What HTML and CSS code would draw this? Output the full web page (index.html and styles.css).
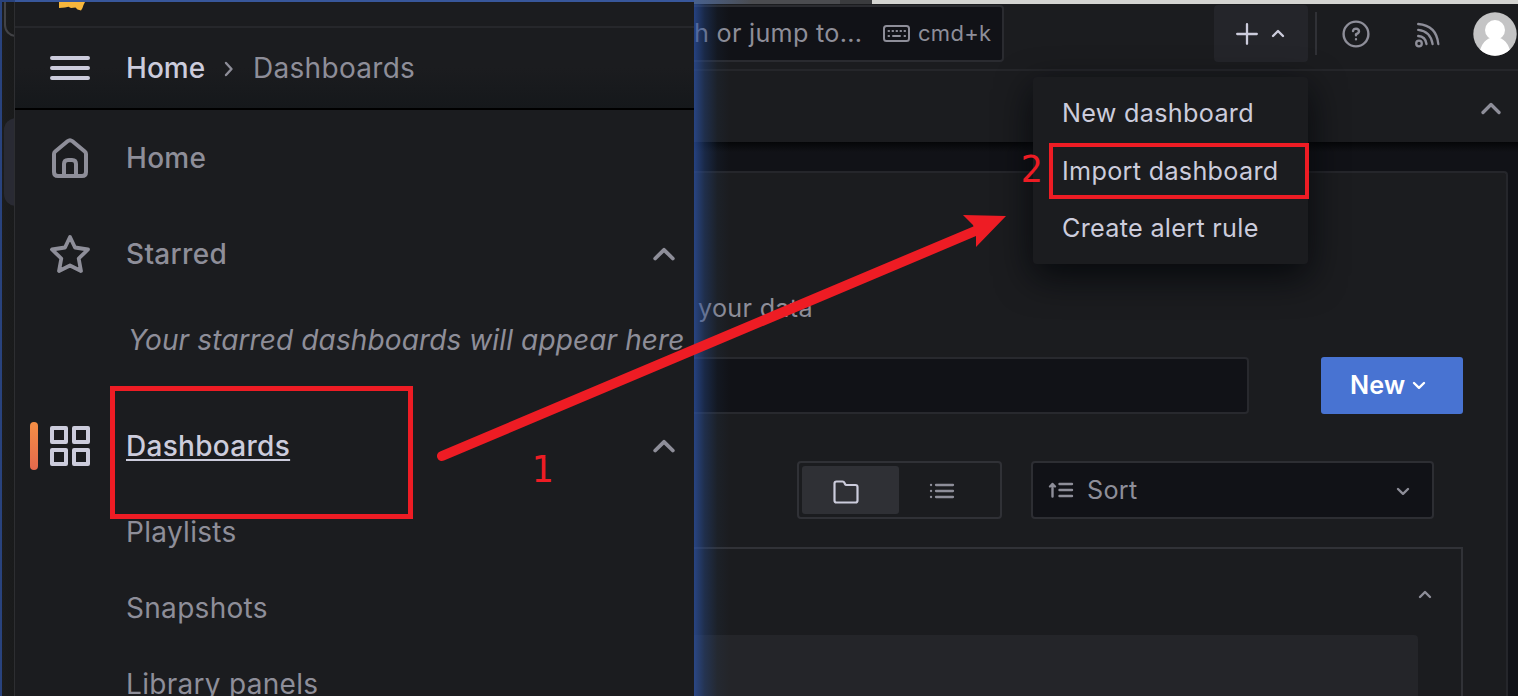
FILE: index.html
```html
<!DOCTYPE html>
<html lang="en">
<head>
<meta charset="utf-8">
<title>Dashboards</title>
<link rel="stylesheet" href="styles.css">
</head>
<body>
<div class="stage">
  <div class="edge">
    <div class="edge-window"><div class="edge-box"></div><div class="edge-tab"></div></div>
  </div>
  <aside class="sidebar">
    <div class="brand">
      <svg class="brand-logo" width="28" height="10" viewBox="0 0 28 10"><path d="M1 0H27L25.500 3L24.500 6L23 8.500L19.500 7.500L17.500 5.500L13 6L10.500 4.800L7 5.500L1 6Z" fill="#f7b63b"/></svg>
    </div>
    <div class="crumbs">
      <svg class="burger" width="40" height="24" viewBox="0 0 40 24" stroke="#ccccdc" stroke-width="4" stroke-linecap="round"><path d="M2 2H38M2 12H38M2 22H38"/></svg>
      <span class="crumb-home">Home</span>
      <svg class="crumb-sep" width="10" height="16" viewBox="0 0 10 16" fill="none" stroke="#8d8d98" stroke-width="2.400" stroke-linecap="round" stroke-linejoin="round"><path d="M2 2L7.500 8L2 14"/></svg>
      <span class="crumb-page">Dashboards</span>
    </div>
    <nav class="nav">
      <a class="nav-row">
        <svg class="nav-icon" width="40" height="44" viewBox="0 0 40 44" fill="none" stroke="#8e8e99" stroke-width="4" stroke-linejoin="round"><path d="M4 18Q4 16.500 5.200 15.500L17.500 5.200Q20 3.200 22.500 5.200L34.800 15.500Q36 16.500 36 18V36Q36 40 32 40H8Q4 40 4 36ZM14 40V28Q14 24 18 24H22Q26 24 26 28V40"/></svg>
        <span class="nav-label">Home</span>
      </a>
      <a class="nav-row">
        <svg class="nav-icon" width="40" height="44" viewBox="0 0 40 44" fill="none" stroke="#8e8e99" stroke-width="3.800" stroke-linejoin="round"><path d="M20 5L25 15.500L38 17.500L28.700 26.500L31 39L20 33.500L9 39L11.300 26.500L2 17.500L15 15.500Z"/></svg>
        <span class="nav-label">Starred</span>
        <svg class="nav-chevron" width="22" height="14" viewBox="0 0 22 14" fill="none" stroke="#8e8e99" stroke-width="3.800" stroke-linecap="round" stroke-linejoin="round"><path d="M2.200 11.500L11 2.800L19.800 11.500"/></svg>
      </a>
      <div class="nav-sub nav-note">Your starred dashboards will appear here</div>
      <a class="nav-row nav-active">
        <svg class="nav-icon" width="40" height="40" viewBox="0 0 40 40" fill="none" stroke="#ccccdc" stroke-width="4" stroke-linejoin="round"><path d="M2 2H16V16H2ZM24 2H38V16H24ZM2 24H16V38H2ZM24 24H38V38H24Z"/></svg>
        <span class="nav-label">Dashboards</span>
        <svg class="nav-chevron" width="22" height="14" viewBox="0 0 22 14" fill="none" stroke="#8e8e99" stroke-width="3.800" stroke-linecap="round" stroke-linejoin="round"><path d="M2.200 11.500L11 2.800L19.800 11.500"/></svg>
      </a>
      <a class="nav-sub">Playlists</a>
      <a class="nav-sub">Snapshots</a>
      <a class="nav-sub">Library panels</a>
    </nav>
  </aside>
  <main class="main">
    <div class="tabstrip"><div class="tab-a"></div><div class="tab-b"></div><div class="tab-c"></div></div>
    <header class="topbar">
      <div class="search">
        <span class="search-text">h or jump to...</span>
        <svg class="key-icon" width="27" height="17" viewBox="0 0 27 17" fill="none" stroke="#8e8e99" stroke-width="2" stroke-linecap="round"><rect x="1" y="1" width="25" height="15" rx="2.500"/><path d="M5.500 6h.6M9.500 6h.6M13.500 6h.6M17.500 6h.6M21.500 6h.6M5.500 11h.6M10 11h7M21.500 11h.6"/></svg>
        <span class="key-text">cmd+k</span>
      </div>
      <div class="add">
        <svg width="22" height="22" viewBox="0 0 22 22" stroke="#ccccdc" stroke-width="2.300" stroke-linecap="round"><path d="M11 1.200V20.800M1.200 11H20.800"/></svg>
        <svg class="add-chev" width="14" height="9" viewBox="0 0 14 9" fill="none" stroke="#ccccdc" stroke-width="2.400" stroke-linecap="round" stroke-linejoin="round"><path d="M2 7L7 2L12 7"/></svg>
      </div>
      <div class="divider"></div>
      <svg class="help" width="28" height="28" viewBox="0 0 28 28" fill="none" stroke="#8e8e99" stroke-width="2.400" stroke-linecap="round" stroke-linejoin="round"><circle cx="14" cy="14" r="12.400"/><path d="M11 11Q11.500 8.600 14 8.600Q17 8.800 17 11.400Q16.800 13.400 14 14.200V15.200M14 19.200V19.300"/></svg>
      <svg class="news" width="26" height="26" viewBox="0 0 26 26" fill="none" stroke="#8e8e99" stroke-width="2.300" stroke-linecap="round"><circle cx="5" cy="21.500" r="2.800"/><path d="M4.200 14Q11.500 14.500 12.500 22M4.200 7.800Q16.500 9 18.600 22M4.200 2Q22.500 3.500 24.300 22"/></svg>
      <svg class="avatar" width="44" height="44" viewBox="0 0 44 44"><defs><clipPath id="face"><circle cx="22" cy="22" r="21.700"/></clipPath></defs><g clip-path="url(#face)"><rect width="44" height="44" fill="#c4c4c5"/><circle cx="22" cy="18" r="10" fill="#fff"/><path d="M6 44Q8 26 22 25Q36 26 38 44Z" fill="#fff"/></g></svg>
    </header>
    <div class="toolbar">
      <svg width="20" height="13" viewBox="0 0 20 13" fill="none" stroke="#8e8e99" stroke-width="3.300" stroke-linecap="round" stroke-linejoin="round"><path d="M2 10.500L10 2.500L18 10.500"/></svg>
    </div>
    <div class="page">
      <section class="panel">
        <p class="subtitle">your data</p>
        <div class="find-row">
          <div class="find"></div>
          <button class="new-btn">New<svg width="14" height="9" viewBox="0 0 14 9" fill="none" stroke="#fff" stroke-width="2.400" stroke-linecap="round" stroke-linejoin="round"><path d="M2 2L7 6.800L12 2"/></svg></button>
        </div>
        <div class="filters">
          <div class="views">
            <div class="view-on"><svg width="26" height="24" viewBox="0 0 26 24" fill="none" stroke="#ccccdc" stroke-width="2.200" stroke-linejoin="round"><path d="M1.500 3.500Q1.500 1.500 3.500 1.500H9.500Q11 1.500 11.500 3L12 4Q12.400 5 13.500 5H22.500Q24.500 5 24.500 7V20.500Q24.500 22.500 22.500 22.500H3.500Q1.500 22.500 1.500 20.500Z"/></svg></div>
            <div class="view-off"><svg width="26" height="18" viewBox="0 0 26 18" stroke="#8e8e99" stroke-width="2.300" stroke-linecap="round"><path d="M2 3h.1M2 9h.1M2 15h.1M7 3H24M7 9H24M7 15H24"/></svg></div>
          </div>
          <div class="sort">
            <svg width="26" height="18" viewBox="0 0 26 18" fill="none" stroke="#8e8e99" stroke-width="2.400" stroke-linecap="round" stroke-linejoin="round"><path d="M4.500 15.500V3M2 5.500L4.500 3L7 5.500M11.500 3H24M11.500 9H24M11.500 15H24"/></svg>
            <span class="sort-text">Sort</span>
            <svg class="sort-chev" width="14" height="9" viewBox="0 0 14 9" fill="none" stroke="#8e8e99" stroke-width="2.400" stroke-linecap="round" stroke-linejoin="round"><path d="M2 2L7 6.800L12 2"/></svg>
          </div>
        </div>
        <div class="results">
          <div class="results-head"><svg width="14" height="9" viewBox="0 0 14 9" fill="none" stroke="#8e8e99" stroke-width="2.400" stroke-linecap="round" stroke-linejoin="round"><path d="M2 7L7 2L12 7"/></svg></div>
          <div class="results-body"></div>
        </div>
      </section>
    </div>
  </main>
  <div class="glow"></div>
  <div class="menu">
    <div class="menu-item">New dashboard</div>
    <div class="menu-item">Import dashboard</div>
    <div class="menu-item">Create alert rule</div>
  </div>
  <div class="mark mark-nav"></div>
  <div class="mark mark-menu"></div>
  <svg class="arrow" width="1518" height="696" viewBox="0 0 1518 696"><path d="M442 456L980 229" stroke="#ee1c24" stroke-width="10" stroke-linecap="round"/><path d="M1006 216L963 215L973 225L976 234V247Z" fill="#ee1c24"/></svg>
  <span class="step step-one">1</span>
  <span class="step step-two">2</span>
</div>
</body>
</html>
```
FILE: styles.css
```css
* { box-sizing: border-box; }
body { margin: 0; background: #111217; }
.stage {
  position: relative;
  display: grid;
  grid-template-columns: 15px 679px 824px;
  width: 1518px;
  height: 696px;
  overflow: hidden;
  font-family: Inter, "Liberation Sans", sans-serif;
  color: #8e8e99;
}
svg { display: block; flex: none; }

/* window behind the sidebar */
.edge { background: #29437e; padding: 2px 0 0 2px; height: 696px; }
.edge-window { height: 694px; background: linear-gradient(90deg, #1c1d1e, #191a1b); border-right: 1px solid #2d2e31; overflow: hidden; padding-left: 2px; }
.edge-box { width: 30px; height: 35px; border: 2px solid #414246; border-top: 0; border-radius: 0 0 0 12px; }
.edge-tab { width: 30px; height: 88px; margin-top: 81px; border-radius: 12px; background: #292a33; }

.sidebar { border-top: 2px solid #38579b; background: #1b1c1f; height: 696px; overflow: hidden; }
.brand { height: 26px; border-bottom: 2px solid #26272b; padding-left: 43px; }
.crumbs {
  display: flex; align-items: center; height: 82px; padding-left: 35px; padding-bottom: 1px;
  border-bottom: 2px solid #000; font-size: 28px; letter-spacing: .3px;
  background: linear-gradient(#1b1c1f 50%, #15181b);
}
.crumb-home { color: #ccccdc; font-weight: 500; letter-spacing: .05px; margin-left: 36px; width: 80px; }
.crumb-sep { margin-left: 18px; margin-top: 3px; }
.crumb-page { margin-left: 19px; }

.nav { font-size: 28px; letter-spacing: .3px; }
.nav-row { display: flex; align-items: center; height: 96px; padding: 0 19px 0 35px; }
.nav-label { font-weight: 500; margin-left: 36px; }
.nav-chevron { margin-left: auto; }
.nav-sub { display: flex; align-items: center; height: 76px; padding-left: 111px; white-space: nowrap; }
.nav-note { font-style: italic; letter-spacing: .12px; padding-left: 113px; margin-bottom: 20px; }
.nav-active { padding-left: 15px; color: #ccccdc; }
.nav-active::before { content: ""; width: 8px; height: 48px; border-radius: 4px; background: linear-gradient(#f58e45, #e5694d); margin-right: 12px; }
.nav-active .nav-label { text-decoration: underline; text-decoration-thickness: 2px; text-underline-offset: 3px; }

.main { display: flex; flex-direction: column; height: 696px; overflow: hidden; background: #111217; }
.tabstrip { display: flex; height: 4px; flex: none; }
.tab-a { width: 146px; background: linear-gradient(90deg, #48618e, #4b4c50 40%); }
.tab-b { width: 32px; background: #3a3b3e; }
.tab-c { flex: 1; background: #d4d4d1; }
.topbar { display: flex; align-items: center; height: 67px; flex: none; background: #1b1c1f; border-bottom: 2px solid #25262a; padding-bottom: 6px; }
.search {
  display: flex; align-items: center; width: 310px; height: 57px; padding-bottom: 1px; background: #111217;
  border: 2px solid #2a2b30; border-left: 0; border-radius: 0 4px 4px 0; letter-spacing: .28px;
}
.search-text { font-size: 25.200px; width: 189px; white-space: nowrap; }
.key-text { font-size: 22px; margin-left: 8px; }
.add { display: flex; align-items: center; width: 94px; height: 57px; margin-left: 210px; padding-left: 22px; gap: 13px; background: #24252a; border-radius: 4px; }
.divider { width: 2px; height: 43px; margin-left: 7px; background: #303136; }
.help { margin-left: 25px; }
.news { margin-left: 44px; margin-top: 2px; }
.avatar { margin-left: 33px; }
.toolbar { display: flex; justify-content: flex-end; align-items: center; height: 71px; flex: none; padding: 4px 17px 0 0; background: #1b1c1f; }
.page { flex: 1; min-height: 0; padding: 29px 10px 0 0; background: linear-gradient(#050608, #111217 10px); }
.panel { height: 600px; border: 2px solid #25262b; border-left: 0; border-bottom: 0; border-radius: 0 4px 0 0; background: #1b1c1f; padding-top: 120px; }
.subtitle { margin: 0 0 0 4px; height: 30px; line-height: 30px; font-size: 25.200px; letter-spacing: .28px; }
.find-row { display: flex; justify-content: space-between; margin: 34px 43px 0 0; }
.find { width: 555px; height: 57px; background: #111217; border: 2px solid #28292e; border-left: 0; border-radius: 0 4px 4px 0; }
.new-btn {
  display: flex; align-items: center; gap: 7px; width: 142px; height: 57px; padding: 0 0 1px 29px; border: 0; border-radius: 3px;
  background: #4873d2; color: #fff; font: 600 25.200px Inter, "Liberation Sans", sans-serif; letter-spacing: .15px;
}
.filters { display: flex; gap: 29px; margin: 47px 0 0 103px; }
.views { display: flex; width: 205px; height: 58px; border: 2px solid #303136; border-radius: 4px; padding: 3px; }
.view-on { display: flex; align-items: center; justify-content: center; width: 97px; padding: 3px 10px 0 0; border-radius: 3px; background: #2f3035; }
.view-off { display: flex; align-items: center; padding: 2px 0 0 30px; }
.sort { display: flex; align-items: center; width: 403px; height: 58px; border: 2px solid #2d2e33; border-radius: 4px; background: #111217; padding: 0 22px 0 15px; }
.sort-text { font-size: 25.200px; letter-spacing: .28px; margin-left: 13px; }
.sort-chev { margin-left: auto; margin-top: 3px; }
.results { width: 769px; height: 200px; margin-top: 28px; border-top: 2px solid #313237; border-right: 2px solid #313237; }
.results-head { display: flex; align-items: center; justify-content: flex-end; height: 86px; padding: 4px 29px 0 0; }
.results-body { width: 724px; height: 100px; border-radius: 0 4px 0 0; background: #242529; }

.glow { position: absolute; left: 694px; top: 4px; width: 36px; height: 692px; background: linear-gradient(90deg, rgba(45,84,170,.72), rgba(38,74,140,.4) 30%, rgba(38,74,120,.1) 65%, transparent); }

.menu {
  position: absolute; left: 1033px; top: 77px; width: 275px; height: 187px; padding-top: 8px;
  background: #1b1c1f; border-radius: 4px; box-shadow: 0 12px 36px rgba(4,6,9,.85);
}
.menu-item { height: 57.700px; line-height: 57.700px; padding-left: 29px; font-size: 25.200px; letter-spacing: .3px; color: #ccccdc; white-space: nowrap; }

.mark { position: absolute; border: 5px solid #ee1c24; }
.mark-nav { left: 110px; top: 386px; width: 303px; height: 133px; }
.mark-menu { left: 1049px; top: 143px; width: 260px; height: 56px; border-width: 4px; }
.arrow { position: absolute; left: 0; top: 0; }
.step { position: absolute; font: 37px/42px "DejaVu Sans", sans-serif; color: #ee1c24; transform: scaleX(.94); }
.step-one { left: 531px; top: 449px; }
.step-two { left: 1020px; top: 149px; }
```
